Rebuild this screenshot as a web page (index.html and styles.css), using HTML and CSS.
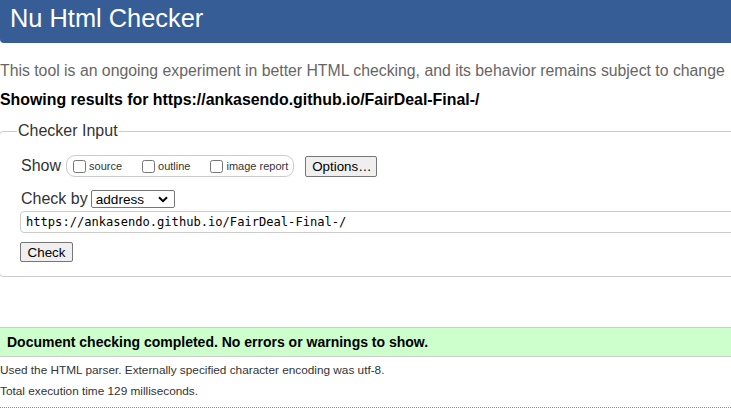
FILE: index.html
```html
<!DOCTYPE html>
<html lang="en">
<head>
<meta charset="utf-8">
<title>Showing results for https://ankasendo.github.io/FairDeal-Final-/ - Nu Html Checker</title>
<link rel="stylesheet" href="styles.css">
</head>
<body>
<header class="masthead">
  <h1 class="masthead-title">Nu Html Checker</h1>
</header>
<p class="intro">This tool is an ongoing experiment in better HTML checking, and its behavior remains subject to change</p>
<p class="showing">Showing results for https://ankasendo.github.io/FairDeal-Final-/</p>
<form class="checker-form">
  <fieldset class="checker-fieldset">
    <legend class="checker-legend">Checker Input</legend>
    <div class="row row-show">
      <span class="row-label">Show</span>
      <span class="pill">
        <label class="opt"><input type="checkbox" class="cb">source</label>
        <label class="opt"><input type="checkbox" class="cb">outline</label>
        <label class="opt opt-last"><input type="checkbox" class="cb">image report</label>
      </span>
      <button type="button" class="btn btn-options">Options…</button>
    </div>
    <div class="row row-by">
      <span class="row-label">Check by</span>
      <span class="select-box">
        <select class="select">
          <option>address</option>
          <option>file upload</option>
          <option>text input</option>
        </select>
        <svg class="chevron" width="10" height="7" viewBox="0 0 10 7" aria-hidden="true"><path d="M1 1.2 L5 5.2 L9 1.2" fill="none" stroke="#000" stroke-width="2"/></svg>
      </span>
    </div>
    <input class="doc-url" type="url" value="https://ankasendo.github.io/FairDeal-Final-/">
    <div class="row row-submit">
      <button type="submit" class="btn btn-check">Check</button>
    </div>
  </fieldset>
</form>
<p class="success">Document checking completed. No errors or warnings to show.</p>
<p class="details details-first">Used the HTML parser. Externally specified character encoding was utf-8.</p>
<p class="details">Total execution time 129 milliseconds.</p>
<hr class="dotted">
</body>
</html>
```
FILE: styles.css
```css
html, body {
  margin: 0;
  padding: 0;
  overflow: hidden;
  background: #fff;
}

body {
  font-family: "Liberation Sans", Arial, sans-serif;
  color: #000;
}

.masthead {
  background: #365d95;
  height: 43px;
  box-sizing: border-box;
  padding: 3px 0 0 10px;
  border-bottom-left-radius: 4px;
}

.masthead-title {
  margin: 0;
  font-size: 25.4px;
  font-weight: normal;
  line-height: 30px;
  color: #fff;
}

.intro {
  margin: 18px 0 0;
  font-size: 15.8px;
  line-height: 20px;
  color: #666;
  white-space: nowrap;
}

.showing {
  margin: 9px 0 0;
  font-size: 15.9px;
  line-height: 20px;
  font-weight: bold;
  white-space: nowrap;
}

.checker-form {
  margin: 11px 0 0;
}

.checker-fieldset {
  margin: 0 -40px 0 -1px;
  border: 1px solid #ccc;
  border-radius: 4px;
  padding: 0 0 14px 20px;
  min-width: 0;
}

.checker-legend {
  margin-left: -3px;
  padding: 0 1px;
  font-size: 16px;
  line-height: 20px;
  color: #333;
}

.row {
  display: flex;
  align-items: center;
}

.row-show {
  margin-top: 14px;
  height: 22px;
}

.row-label {
  font-size: 16px;
  color: #333;
  margin-left: 1px;
}

.pill {
  display: inline-flex;
  align-items: center;
  height: 22px;
  box-sizing: border-box;
  margin-left: 5px;
  padding: 0 0 0 2px;
  border: 1px solid #ccc;
  border-radius: 9px;
}

.opt {
  display: inline-flex;
  align-items: center;
  font-size: 11px;
  color: #333;
  margin-right: 16px;
}

.opt-last {
  margin-right: 5px;
}

.cb {
  width: 13px;
  height: 13px;
  margin: 0 3px 0 4px;
}

.btn {
  font-family: "Liberation Sans", Arial, sans-serif;
  font-size: 13.33px;
  color: #000;
  background: #efefef;
  border: 1px solid #767676;
  border-radius: 2px;
  padding: 0 6px;
  height: 21px;
  box-sizing: border-box;
}

.btn-options {
  margin-left: 11px;
  width: 72px;
}

.row-by {
  margin-top: 13px;
  height: 18px;
}

.select-box {
  display: inline-flex;
  align-items: center;
  margin-left: 3px;
  width: 84px;
  height: 18px;
  box-sizing: border-box;
  border: 1px solid #767676;
  border-radius: 2px;
  background: #fff;
}

.select {
  appearance: none;
  -webkit-appearance: none;
  border: 0;
  background: transparent;
  font-family: "Liberation Sans", Arial, sans-serif;
  font-size: 13.6px;
  color: #000;
  padding: 0 0 0 4px;
  margin: 0;
  flex: 1;
  min-width: 0;
  height: 16px;
  outline: none;
}

.chevron {
  margin-right: 6px;
  flex: none;
}

.doc-url {
  display: block;
  box-sizing: border-box;
  width: 100%;
  height: 22px;
  margin: 3px 0 0;
  padding: 0 0 0 5px;
  border: 1px solid #ccc;
  border-radius: 4px 0 0 4px;
  font-family: "DejaVu Sans Mono", "Liberation Mono", monospace;
  font-size: 12.1px;
  color: #000;
  outline: none;
}

.row-submit {
  margin-top: 9px;
}

.btn-check {
  width: 53px;
  height: 20px;
}

.success {
  margin: 50px 0 0;
  height: 30px;
  box-sizing: border-box;
  padding: 0 0 0 7px;
  background: #ccffcc;
  border-top: 1px solid #ccc;
  border-bottom: 1px solid #ccc;
  font-size: 14px;
  font-weight: bold;
  line-height: 28px;
  white-space: nowrap;
}

.details {
  margin: 0;
  font-size: 11.8px;
  line-height: 21px;
  color: #333;
  white-space: nowrap;
}

.details-first {
  margin-top: 3px;
}

.dotted {
  margin: 5px 0 0;
  border: 0;
  border-top: 1px dotted #888;
  height: 0;
}
```
